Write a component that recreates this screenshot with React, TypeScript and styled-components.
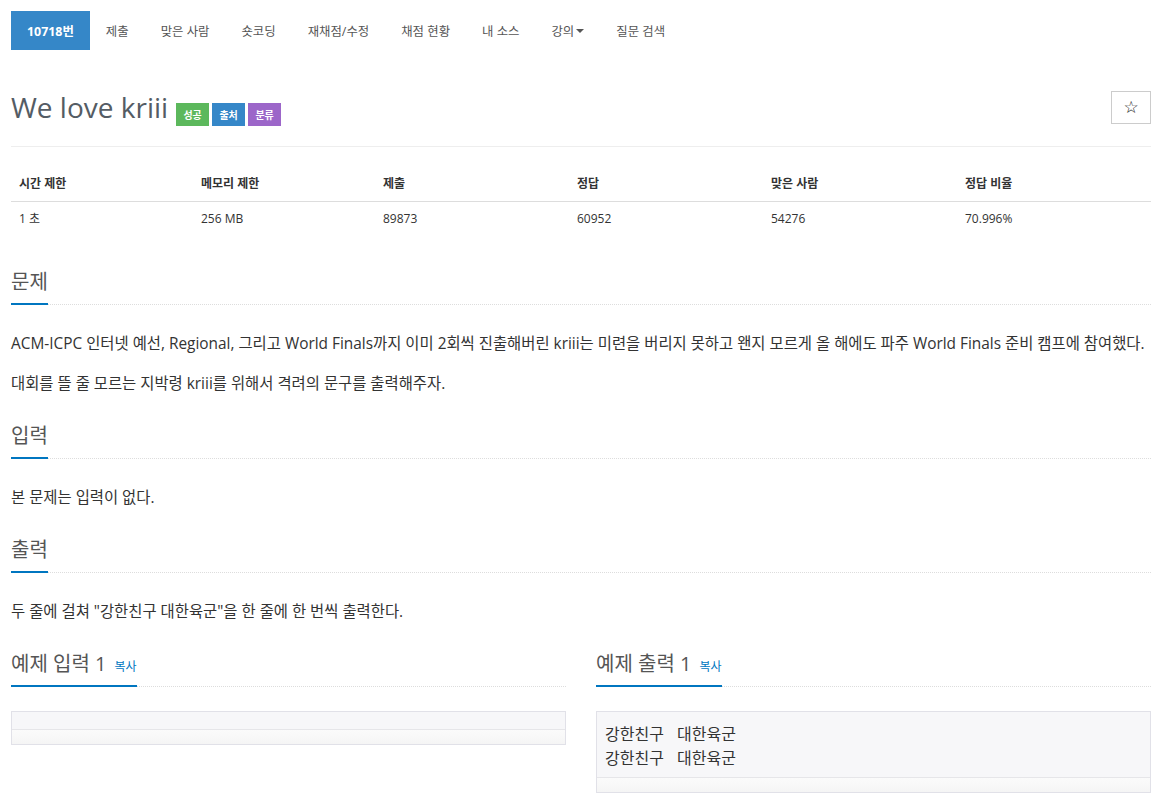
import styled, { createGlobalStyle } from 'styled-components';

const GlobalStyle = createGlobalStyle`
  html, body {
    margin: 0;
    padding: 0;
    background: #fff;
  }
  body {
    font-family: "Open Sans", "Noto Sans CJK KR", sans-serif;
    color: #333;
  }
  * {
    box-sizing: border-box;
  }
`;

const Page = styled.div`
  width: 1174px;
  padding: 11px 23px 40px 11px;
`;

const Nav = styled.ul`
  display: flex;
  list-style: none;
  margin: 0;
  padding: 0;
  height: 39px;
`;

const NavItem = styled.li<{ $active?: boolean }>`
  display: flex;
  align-items: center;
  padding: 0 16px;
  height: 39px;
  font-size: 12.4px;
  color: ${(p) => (p.$active ? '#fff' : '#555')};
  background: ${(p) => (p.$active ? '#3587c8' : 'transparent')};
  font-weight: ${(p) => (p.$active ? 700 : 400)};
  cursor: pointer;
`;

const Caret = styled.span`
  display: inline-block;
  margin-left: 2px;
  width: 0;
  height: 0;
  border-left: 4px solid transparent;
  border-right: 4px solid transparent;
  border-top: 4px solid #555;
  vertical-align: middle;
`;

const TitleRow = styled.div`
  display: flex;
  justify-content: space-between;
  align-items: flex-start;
  margin-top: 41px;
`;

const Title = styled.h1`
  display: flex;
  align-items: flex-start;
  margin: 0;
  font-size: 28px;
  line-height: 33px;
  font-weight: 400;
  color: #545c64;
`;

const Labels = styled.div`
  display: flex;
  gap: 3px;
  margin: 12px 0 0 8px;
`;

const Label = styled.span<{ $color: string }>`
  display: inline-flex;
  align-items: center;
  justify-content: center;
  width: 33px;
  height: 23px;
  background: ${(p) => p.$color};
  color: #fff;
  font-size: 10px;
  font-weight: 700;
  line-height: 1;
`;

const StarButton = styled.button`
  width: 40px;
  height: 33px;
  border: 1px solid #ccc;
  background: #fff;
  font-family: "DejaVu Sans", sans-serif;
  font-size: 17px;
  line-height: 1;
  color: #222;
  padding: 0;
  cursor: pointer;
`;

const Rule = styled.hr`
  margin: 20px 0 0;
  border: 0;
  border-top: 1px solid #eee;
`;

const InfoTable = styled.table`
  width: 100%;
  margin-top: 20px;
  border-collapse: collapse;
  font-size: 12px;
  th, td {
    text-align: left;
    padding: 8px;
    line-height: 18px;
  }
  th {
    font-weight: 700;
    color: #333;
    border-bottom: 1px solid #ddd;
  }
`;

const Section = styled.section<{ $top?: number }>`
  display: flex;
  flex-direction: column;
  margin-top: ${(p) => p.$top ?? 25}px;
`;

const Headline = styled.div<{ $gap?: number }>`
  border-bottom: 1px dotted #ddd;
  margin-bottom: ${(p) => p.$gap ?? 24}px;
`;

const HeadlineText = styled.h2`
  display: inline-flex;
  align-items: baseline;
  height: 35px;
  margin: 0 0 -1px;
  padding-bottom: 9px;
  border-bottom: 2px solid #0076c0;
  font-size: 20px;
  line-height: 24px;
  font-weight: 400;
  color: #555;
`;

const CopyLink = styled.span`
  margin-left: 8px;
  font-size: 12px;
  line-height: 1;
  color: #0076c0;
`;

const Paragraph = styled.p`
  margin: 0 0 10px;
  font-size: 15.4px;
  line-height: 30px;
  color: #333;
  white-space: nowrap;
  &:last-child {
    margin-bottom: 0;
  }
`;

const SampleGrid = styled.div`
  display: grid;
  grid-template-columns: 1fr 1fr;
  gap: 30px;
  margin-top: 25px;
`;

const SampleBox = styled.div`
  margin-top: 24px;
  border: 1px solid #e1e1e8;
  background: #f7f7f9;
`;

const SamplePre = styled.pre`
  margin: 0;
  padding: 9px 8px 8px;
  font-family: "Noto Sans CJK KR", "Open Sans", sans-serif;
  font-size: 16px;
  line-height: 24px;
  word-spacing: 3px;
  color: #333;
  min-height: 17px;
`;

const ScrollStrip = styled.div`
  height: 15px;
  border-top: 1px solid #e6e6e9;
  background: linear-gradient(#fbfbfb, #f5f5f5);
`;

const navItems = ['제출', '맞은 사람', '숏코딩', '재채점/수정', '채점 현황', '내 소스'];

const stats = [
  ['시간 제한', '1 초'],
  ['메모리 제한', '256 MB'],
  ['제출', '89873'],
  ['정답', '60952'],
  ['맞은 사람', '54276'],
  ['정답 비율', '70.996%'],
];
const colWidths = [182, 182, 194, 194, 194, 194];

const Sample = ({ title, text }: { title: string; text: string }) => (
  <div>
    <Headline $gap={0}>
      <HeadlineText>
        {title}
        <CopyLink>복사</CopyLink>
      </HeadlineText>
    </Headline>
    <SampleBox>
      <SamplePre>{text}</SamplePre>
      <ScrollStrip />
    </SampleBox>
  </div>
);

const App = () => {
  return (
    <>
      <GlobalStyle />
      <Page>
        <Nav>
          <NavItem $active>10718번</NavItem>
          {navItems.map((item) => (
            <NavItem key={item}>{item}</NavItem>
          ))}
          <NavItem>
            강의
            <Caret />
          </NavItem>
          <NavItem>질문 검색</NavItem>
        </Nav>

        <TitleRow>
          <Title>
            We love kriii
            <Labels>
              <Label $color="#5cb85c">성공</Label>
              <Label $color="#3587c8">출처</Label>
              <Label $color="#9c66c9">분류</Label>
            </Labels>
          </Title>
          <StarButton>☆</StarButton>
        </TitleRow>
        <Rule />

        <InfoTable>
          <colgroup>
            {colWidths.map((w, i) => (
              <col key={i} style={{ width: w }} />
            ))}
          </colgroup>
          <thead>
            <tr>
              {stats.map(([h]) => (
                <th key={h}>{h}</th>
              ))}
            </tr>
          </thead>
          <tbody>
            <tr>
              {stats.map(([h, v]) => (
                <td key={h}>{v}</td>
              ))}
            </tr>
          </tbody>
        </InfoTable>

        <Section $top={34}>
          <Headline>
            <HeadlineText>문제</HeadlineText>
          </Headline>
          <Paragraph>
            ACM-ICPC 인터넷 예선, Regional, 그리고 World Finals까지 이미 2회씩 진출해버린 kriii는 미련을 버리지 못하고 왠지 모르게 올 해에도 파주 World Finals 준비 캠프에 참여했다.
          </Paragraph>
          <Paragraph>대회를 뜰 줄 모르는 지박령 kriii를 위해서 격려의 문구를 출력해주자.</Paragraph>
        </Section>

        <Section>
          <Headline>
            <HeadlineText>입력</HeadlineText>
          </Headline>
          <Paragraph>본 문제는 입력이 없다.</Paragraph>
        </Section>

        <Section>
          <Headline>
            <HeadlineText>출력</HeadlineText>
          </Headline>
          <Paragraph>두 줄에 걸쳐 "강한친구 대한육군"을 한 줄에 한 번씩 출력한다.</Paragraph>
        </Section>

        <SampleGrid>
          <Sample title="예제 입력 1" text="" />
          <Sample title="예제 출력 1" text={'강한친구  대한육군\n강한친구  대한육군'} />
        </SampleGrid>
      </Page>
    </>
  );
};

export default App;
